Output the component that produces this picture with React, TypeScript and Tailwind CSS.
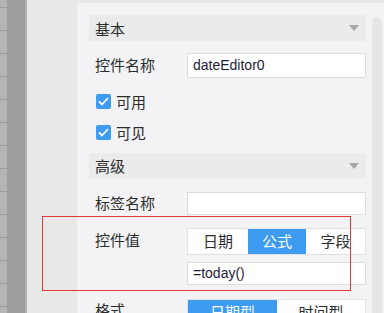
// Property panel: date editor settings
const FONT = { fontFamily: '"Noto Sans CJK SC", "Noto Sans", sans-serif' };
const LATIN = { fontFamily: '"Liberation Sans", Arial, sans-serif' };

function SectionHeader({ title, tall }: { title: string; tall?: boolean }) {
  return (
    <div className={`flex items-center justify-between bg-[#ebebeb] pl-[6px] pr-[7px] ${tall ? 'h-[26px]' : 'h-[25px]'}`}>
      <span className="text-[15px] leading-none text-[#2b2b2b]">{title}</span>
      <svg width="10" height="6" viewBox="0 0 10 6">
        <path d="M0 0 L10 0 L5 6 Z" fill="#a8a8a8" />
      </svg>
    </div>
  );
}

function Checkbox({ label }: { label: string }) {
  return (
    <div className="flex h-[16px] items-center gap-[5px] pl-[7px]">
      <div className="flex h-[15px] w-[15px] items-center justify-center rounded-[2px] bg-[#3d9bf2]">
        <svg width="11" height="9" viewBox="0 0 11 9">
          <path d="M1 4.5 L4 7.5 L10 1" stroke="#fff" strokeWidth="1.8" fill="none" />
        </svg>
      </div>
      <span className="text-[15px] leading-none text-[#2b2b2b]">{label}</span>
    </div>
  );
}

export default function App() {
  return (
    <div className="flex h-[313px] w-[384px] overflow-hidden bg-[#e8e8e8]" style={FONT}>
      <div className="flex w-[7px] flex-col bg-[#b5b5b5] pt-[7px]">
        {Array.from({ length: 14 }).map((_, i) => (
          <div key={i} className="h-[23px] shrink-0 border-t border-[#9a9a9a]" />
        ))}
      </div>
      <div className="w-[18px] bg-[#9d9d9d]" />
      <div className="w-[2px] bg-[#b0b0b0]" />
      <div className="w-[50px] bg-[#e8e8e8]" />
      <div className="relative flex flex-1 pt-[3px]">
        <div className="flex flex-1 overflow-hidden bg-[#f3f3f5]">
          <div className="w-[289px] shrink-0 pl-[12px] pt-[12px]">
            <SectionHeader title="基本" tall />
            <div className="mt-[12px] flex items-center">
              <span className="w-[98px] pl-[6px] text-[15px] text-[#2b2b2b]">控件名称</span>
              <div className="flex h-[25px] flex-1 items-center border border-[#dcdcdc] bg-white pl-[5px] text-[14px] text-[#1d1d3d]" style={LATIN}>
                dateEditor0
              </div>
            </div>
            <div className="mt-[15px]">
              <Checkbox label="可用" />
            </div>
            <div className="mt-[15px]">
              <Checkbox label="可见" />
            </div>
            <div className="mt-[13px]">
              <SectionHeader title="高级" />
            </div>
            <div className="mt-[14px] flex items-center">
              <span className="w-[98px] pl-[6px] text-[15px] text-[#2b2b2b]">标签名称</span>
              <div className="h-[23px] flex-1 border border-[#dcdcdc] bg-white" />
            </div>
            <div className="mt-[13px] flex items-start">
              <span className="mt-[1px] w-[98px] pl-[6px] text-[15px] text-[#2b2b2b]">控件值</span>
              <div className="flex flex-1 flex-col">
                <div className="flex h-[27px] border border-[#e2e2e2] bg-white text-[15px]">
                  <div className="flex w-[60px] items-center justify-center text-[#2b2b2b]">日期</div>
                  <div className="flex w-[58px] items-center justify-center bg-[#3d9bf2] text-white">公式</div>
                  <div className="flex flex-1 items-center justify-center text-[#2b2b2b]">字段</div>
                </div>
                <div className="mt-[7px] flex h-[23px] items-center border border-[#dcdcdc] bg-white pl-[5px] text-[14px] text-[#1d1d3d]" style={LATIN}>
                  =today()
                </div>
              </div>
            </div>
            <div className="mt-[14px] flex items-start">
              <span className="w-[98px] pl-[6px] text-[15px] text-[#2b2b2b]">格式</span>
              <div className="flex h-[27px] flex-1 border border-[#e2e2e2] bg-white text-[15px]">
                <div className="flex w-[89px] items-center justify-center bg-[#3d9bf2] text-white">日期型</div>
                <div className="flex flex-1 items-center justify-center text-[#2b2b2b]">时间型</div>
              </div>
            </div>
          </div>
          <div className="ml-[6px] mt-[14px] h-[300px] w-[10px] shrink-0 rounded-t-[5px] bg-[#e6e6e8]" />
        </div>
        <div className="pointer-events-none absolute left-[-35px] top-[216px] h-[75px] w-[309px] border border-[#e53935]" />
      </div>
    </div>
  );
}
